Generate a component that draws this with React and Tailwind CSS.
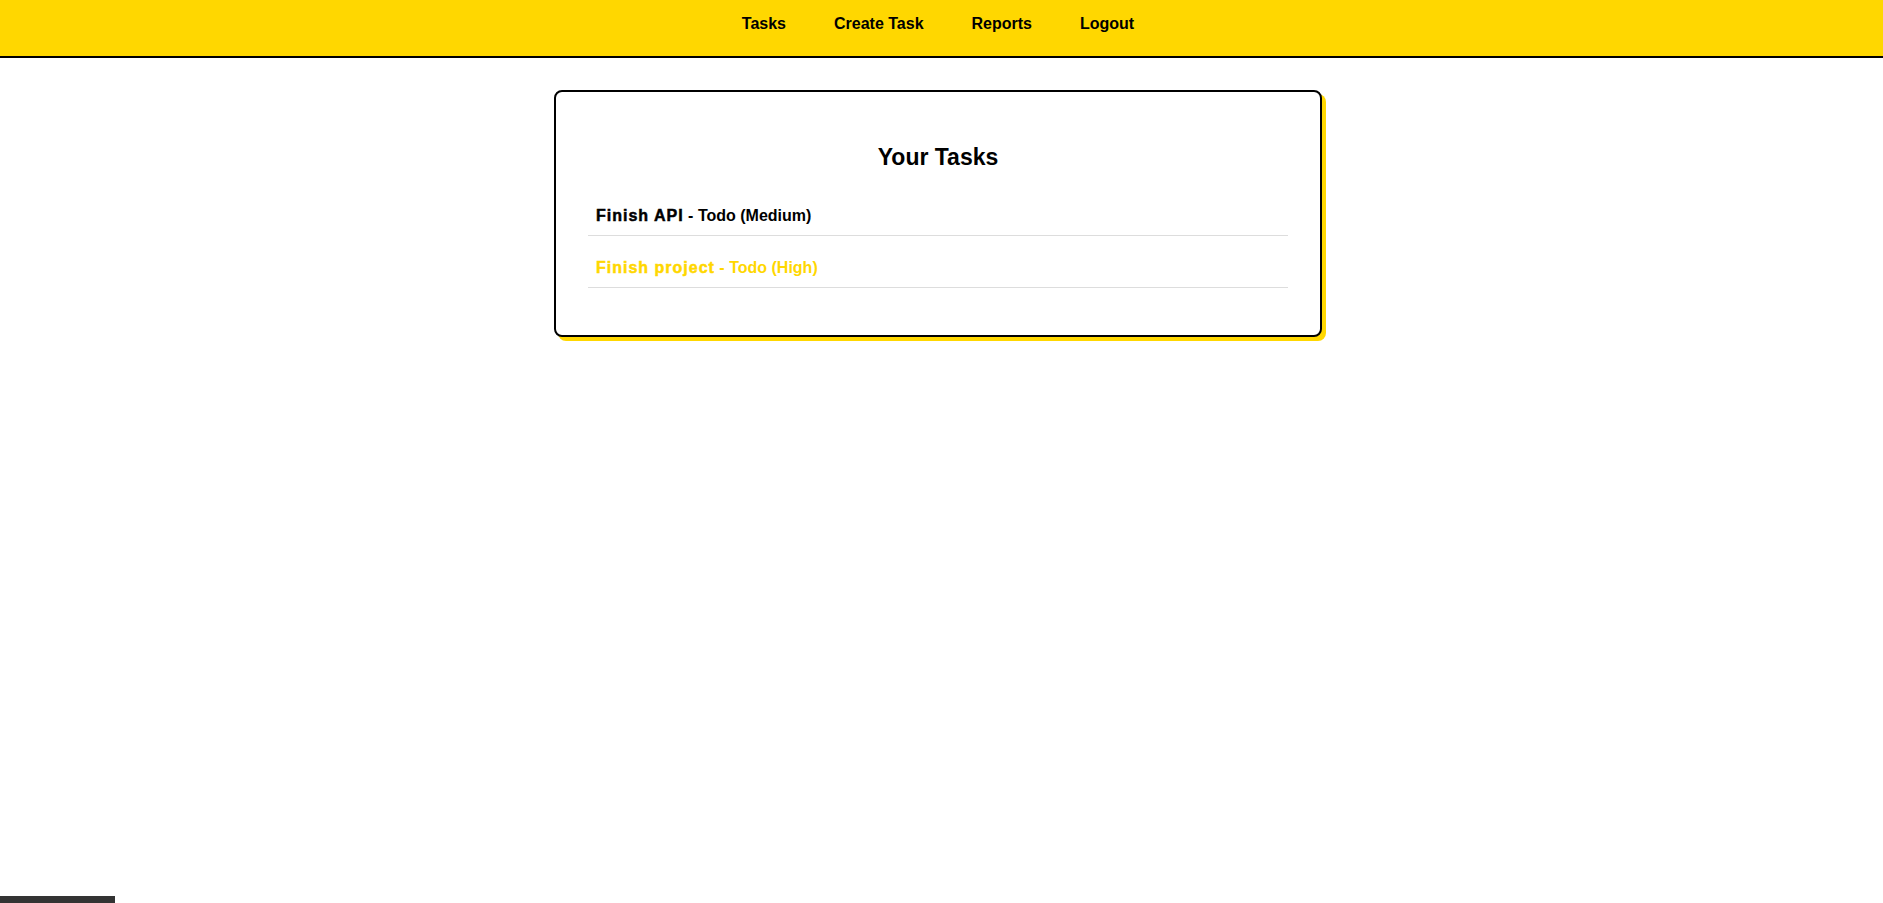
import React from "react";

const tasks = [
  { title: "Finish API", status: "Todo", priority: "Medium" },
  { title: "Finish project", status: "Todo", priority: "High" },
];

const navLinks = ["Tasks", "Create Task", "Reports", "Logout"];

const App = () => {
  return (
    <div className="min-h-screen flex flex-col bg-white text-black font-['Liberation_Sans',Arial,sans-serif]">
      <header className="h-[58px] bg-[#FFD700] border-b-2 border-black">
        <nav className="flex justify-center gap-12 pt-3 pr-[7px]">
          {navLinks.map((link) => (
            <a key={link} href="#" className="text-base leading-6 font-bold text-black">
              {link}
            </a>
          ))}
        </nav>
      </header>

      <main className="flex-1 flex justify-center pt-8 pr-[7px]">
        <div className="w-[768px] self-start border-2 border-black rounded-lg bg-white p-8 shadow-[4px_4px_0_#FFD700]">
          <h2 className="mt-[15px] mb-5 text-center text-[23px] leading-9 font-bold">
            Your Tasks
          </h2>
          <ul className="mb-[15px]">
            {tasks.map((task) => {
              const high = task.priority === "High";
              return (
                <li
                  key={task.title}
                  className={`pt-[9px] pb-[7px] pl-2 mb-[11px] leading-6 text-base font-bold border-b border-[#ddd] ${
                    high ? "text-[#FFD700]" : "text-black"
                  }`}
                >
                  <strong className="font-black tracking-[1px] [-webkit-text-stroke:0.5px_currentColor]">
                    {task.title}
                  </strong>{" "}
                  - {task.status} ({task.priority})
                </li>
              );
            })}
          </ul>
        </div>
      </main>

      <div className="h-[7px] w-[115px] bg-[#333]" />
    </div>
  );
};

export default App;
